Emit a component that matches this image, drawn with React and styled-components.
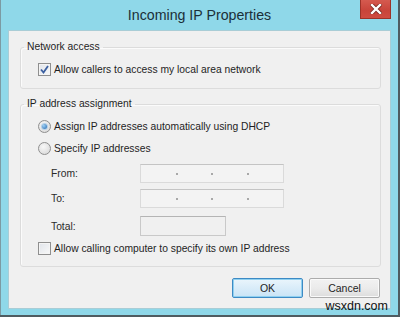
import React from "react"
import styled, { createGlobalStyle } from "styled-components"

const Global = createGlobalStyle`
  html, body {
    margin: 0;
    padding: 0;
    background: #4f5c61;
  }
  body {
    font-family: "Liberation Sans", Arial, sans-serif;
  }
`

const Window = styled.div`
  position: relative;
  box-sizing: border-box;
  width: 398px;
  height: 315px;
  background: #8fd8e9;
  border-left: 1px solid #7c9aa3;
  padding: 0 7px 6px 7px;
  display: flex;
  flex-direction: column;
`

const TitleBar = styled.div`
  height: 30px;
  display: grid;
  grid-template-columns: 1fr auto 1fr;
  align-items: start;
`

const Title = styled.div`
  grid-column: 2;
  font-size: 14.2px;
  line-height: 30px;
  color: #1b2f38;
`

const CloseButton = styled.div`
  grid-column: 3;
  justify-self: end;
  width: 31px;
  height: 19px;
  box-sizing: border-box;
  border: 1px solid #9c3329;
  border-top: none;
  background: linear-gradient(#d55a4f, #c8443a 60%, #cf4c41);
  display: flex;
  align-items: center;
  justify-content: center;
`

const Client = styled.div`
  flex: 1;
  background: #f0f0f0;
  border: 1px solid #a9cdd6;
  padding: 9px 9px 0 11px;
  display: flex;
  flex-direction: column;
`

const Group = styled.fieldset`
  margin: ${({ $top }) => $top}px 0 0 0;
  padding: ${({ $pad }) => $pad};
  border: 1px solid #dcdcdc;
  border-radius: 3px;
  box-shadow: inset 1px 1px 0 #fbfbfb;
  display: flex;
  flex-direction: column;
`

const Legend = styled.legend`
  margin-left: 3px;
  padding: 0 3px;
  font-size: 10.3px;
  line-height: 14px;
  color: #1e1e1e;
`

const OptionRow = styled.label`
  display: flex;
  align-items: center;
  gap: 3px;
  height: 14px;
  margin-top: ${({ $top }) => $top || 0}px;
  margin-left: 17px;
  font-size: 10.3px;
  color: #1e1e1e;
`

const Box = styled.span`
  box-sizing: border-box;
  width: 13px;
  height: 13px;
  border: 1px solid #8f8f8f;
  background: linear-gradient(135deg, #e0e4ea, #f8f8f8);
  box-shadow: inset 0 0 0 1px #f4f4f4;
  display: flex;
  align-items: center;
  justify-content: center;
`

const Radio = styled.span`
  box-sizing: border-box;
  width: 13px;
  height: 13px;
  border-radius: 50%;
  border: 1px solid #8f8f8f;
  background: radial-gradient(circle at 40% 35%, #f8f8f8, #d4d4d4);
  display: flex;
  align-items: center;
  justify-content: center;
`

const Dot = styled.span`
  width: 5px;
  height: 5px;
  border-radius: 50%;
  background: radial-gradient(circle at 35% 35%, #9fd0f4, #2067b0);
  box-shadow: 0 0 0 1px #b5cfe6;
`

const FieldRow = styled.div`
  display: grid;
  grid-template-columns: 89px auto;
  align-items: center;
  margin-top: ${({ $top }) => $top}px;
  margin-left: 30px;
  font-size: 10.3px;
  color: #2a2a2a;
`

const IpInput = styled.div`
  box-sizing: border-box;
  width: 144px;
  height: 19px;
  border: 1px solid #dadada;
  border-top-color: #c4c4c4;
  background: #f3f3f3;
  display: grid;
  grid-template-columns: repeat(4, 1fr);
  padding-top: 8px;
  & > span + span {
    position: relative;
  }
  & > span + span::before {
    content: "";
    position: absolute;
    left: -1px;
    top: 0;
    width: 2px;
    height: 2px;
    background: #a8a8a8;
  }
`

const TotalInput = styled.div`
  box-sizing: border-box;
  width: 86px;
  height: 20px;
  border: 1px solid #c9c9c9;
  border-top-color: #b4b4b4;
  background: #f0f0f0;
`

const ButtonRow = styled.div`
  display: flex;
  justify-content: flex-end;
  gap: 6px;
  margin-top: 11px;
  padding-right: 1px;
`

const Button = styled.div`
  box-sizing: border-box;
  width: 71px;
  height: 20px;
  border: 1px solid ${({ $primary }) => ($primary ? "#3d8ac4" : "#acacac")};
  border-radius: 2px;
  background: ${({ $primary }) =>
    $primary
      ? "linear-gradient(#eaf5fc, #d9ecf9 50%, #c9e4f6)"
      : "linear-gradient(#f2f2f2, #ebebeb 50%, #dddddd)"};
  box-shadow: ${({ $primary }) =>
    $primary ? "inset 0 0 0 1px #8fd0f0" : "inset 0 0 0 1px #fafafa"};
  font-size: 10.5px;
  line-height: 18px;
  text-align: center;
  color: #1e1e1e;
`

const Watermark = styled.div`
  position: absolute;
  right: 10px;
  bottom: 2px;
  font-size: 12.5px;
  line-height: 13px;
  color: #111;
`

function CheckMark() {
  return (
    <svg width="9" height="9" viewBox="0 0 9 9">
      <path d="M1 4.5 L3.5 7.5 L8 1" fill="none" stroke="#3b5fa0" strokeWidth="1.8" />
    </svg>
  )
}

function CloseGlyph() {
  return (
    <svg width="12" height="10" viewBox="0 0 12 10">
      <path d="M2 1 L10 9 M10 1 L2 9" stroke="#7a2a22" strokeWidth="4" strokeLinecap="square" />
      <path d="M2 1 L10 9 M10 1 L2 9" stroke="#ffffff" strokeWidth="2.4" strokeLinecap="square" />
    </svg>
  )
}

function IpField() {
  return (
    <IpInput>
      <span />
      <span />
      <span />
      <span />
    </IpInput>
  )
}

export default function App() {
  return (
    <>
      <Global />
      <Window>
        <TitleBar>
          <Title>Incoming IP Properties</Title>
          <CloseButton>
            <CloseGlyph />
          </CloseButton>
        </TitleBar>
        <Client>
          <Group $top={0} $pad="0 0 12px 0">
            <Legend>Network access</Legend>
            <OptionRow $top={8}>
              <Box>
                <CheckMark />
              </Box>
              Allow callers to access my local area network
            </OptionRow>
          </Group>
          <Group $top={8} $pad="0 0 11px 0">
            <Legend>IP address assignment</Legend>
            <OptionRow $top={8}>
              <Radio>
                <Dot />
              </Radio>
              Assign IP addresses automatically using DHCP
            </OptionRow>
            <OptionRow $top={8}>
              <Radio />
              Specify IP addresses
            </OptionRow>
            <FieldRow $top={9}>
              <span>From:</span>
              <IpField />
            </FieldRow>
            <FieldRow $top={6}>
              <span>To:</span>
              <IpField />
            </FieldRow>
            <FieldRow $top={8}>
              <span>Total:</span>
              <TotalInput />
            </FieldRow>
            <OptionRow $top={5}>
              <Box />
              Allow calling computer to specify its own IP address
            </OptionRow>
          </Group>
          <ButtonRow>
            <Button $primary>OK</Button>
            <Button>Cancel</Button>
          </ButtonRow>
        </Client>
        <Watermark>wsxdn.com</Watermark>
      </Window>
    </>
  )
}
